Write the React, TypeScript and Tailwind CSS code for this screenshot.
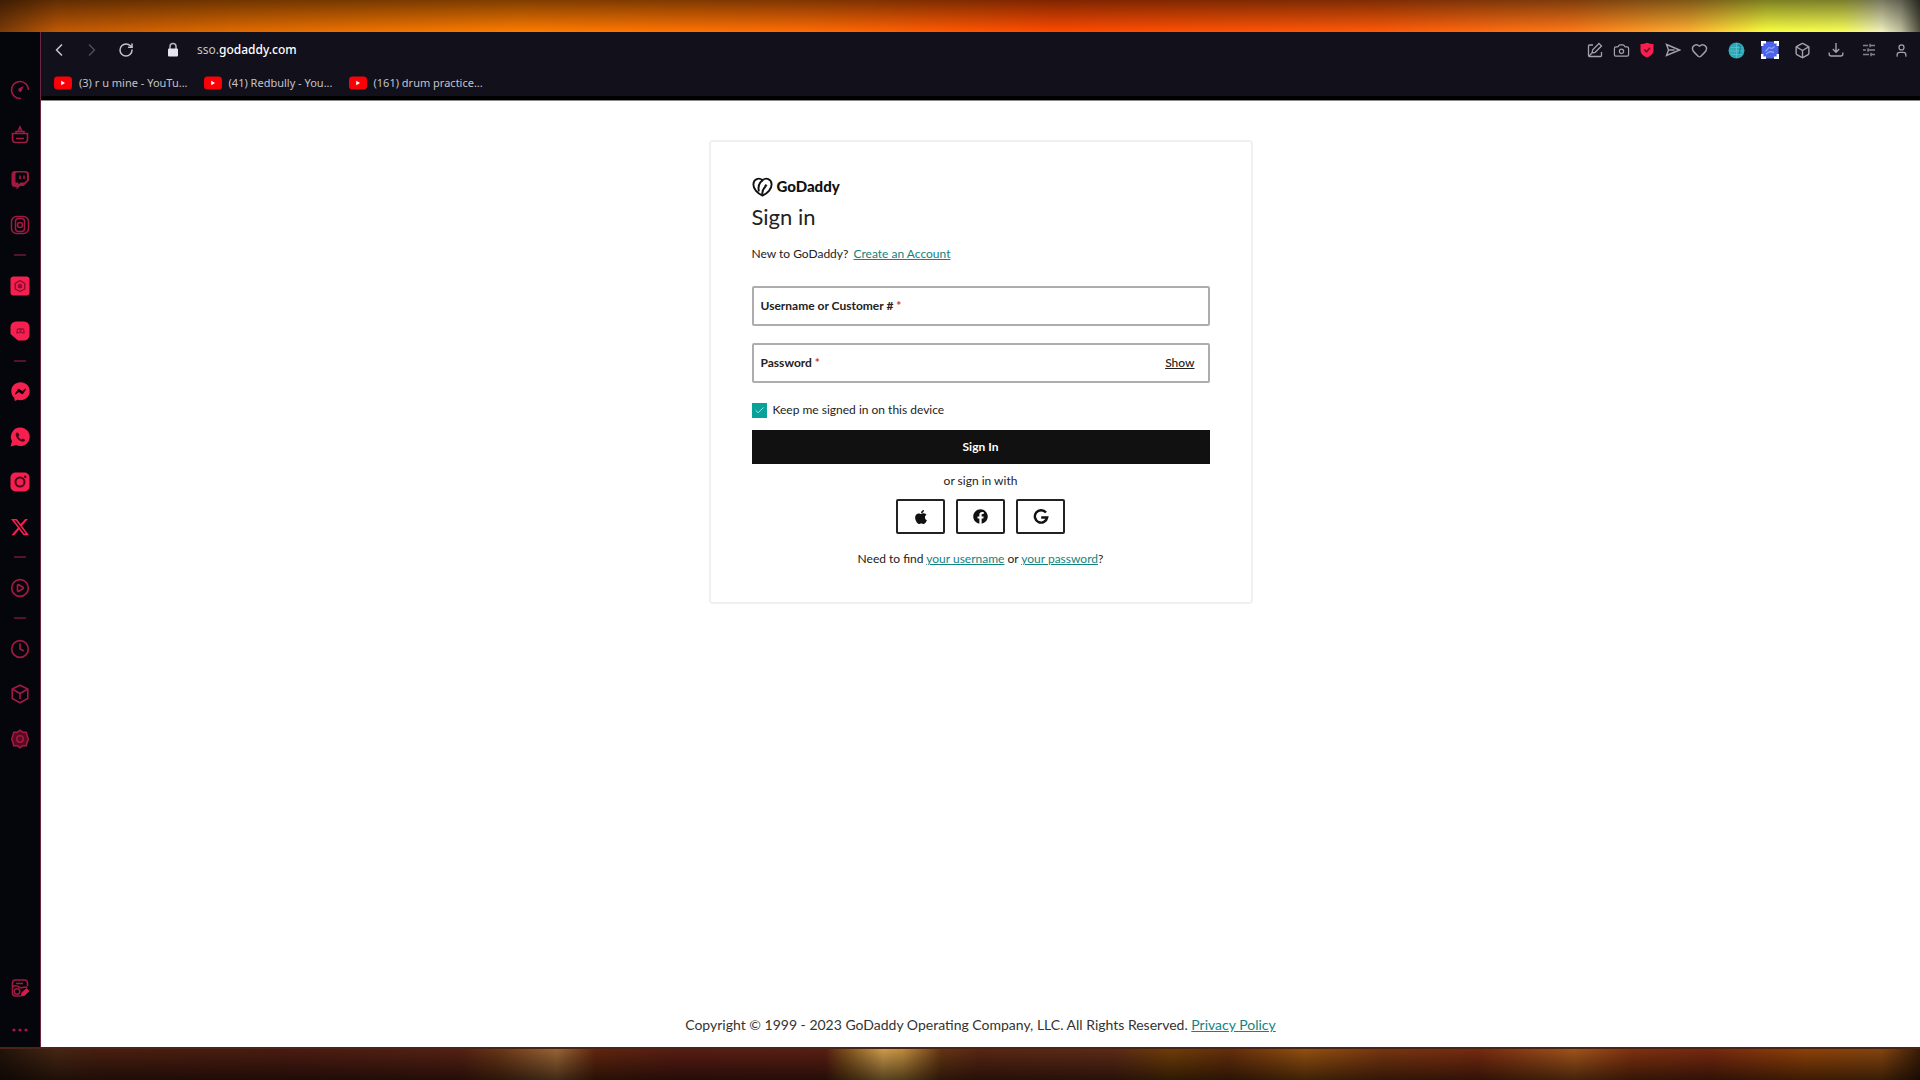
import { useState } from "react";
import type { ReactNode } from "react";
import { FaApple, FaFacebook, FaFacebookMessenger } from "react-icons/fa";
import { FaXTwitter } from "react-icons/fa6";
import {
	Box,
	Camera,
	Check,
	ChevronLeft,
	ChevronRight,
	CirclePlay,
	Clock4,
	Heart,
	RotateCw,
	User,
} from "lucide-react";

const GaugeIcon = () => (
	<svg width="20" height="20" viewBox="0 0 20 20" fill="none" stroke="currentColor" strokeWidth="1.6">
		<path d="M11 18.400A8.500 8.500 0 1 1 18.500 10" />
		<path d="M13.500 6 11.800 11a2 2 0 1 1-2.800-2.800z" fill="currentColor" stroke="none" />
	</svg>
);

const BagIcon = () => (
	<svg width="20" height="20" viewBox="0 0 20 20" fill="none" stroke="currentColor" strokeWidth="1.6">
		<path d="M2.500 8.500h15v6a3 3 0 0 1-3 3h-9a3 3 0 0 1-3-3z" />
		<path d="M6 8.500V6.500h8v2M8 6.500 10 2l2 4.500M6 13.500h8" />
	</svg>
);

const TwitchIcon = () => (
	<svg width="20" height="20" viewBox="0 0 20 20">
		<path
			fill="currentColor"
			fillRule="evenodd"
			d="M5 1h10.500a3.500 3.500 0 0 1 3.500 3.500v6L13.500 16H10l-3.500 3.500V17H5a3.500 3.500 0 0 1-3.500-3.500v-9A3.500 3.500 0 0 1 5 1zm2 1.600a1.500 1.500 0 0 0-1.500 1.500v8.400h3v2l2.200-2h3.600l2.700-2.500V4.600a2 2 0 0 0-2-2z"
		/>
		<path d="M10 5.500V9M14 5.500V9" stroke="currentColor" strokeWidth="1.600" />
	</svg>
);

const PlayerIcon = () => (
	<svg width="20" height="20" viewBox="0 0 20 20" fill="none" stroke="currentColor" strokeWidth="1.500">
		<rect x="1.500" y="1.500" width="17" height="17" rx="5" />
		<rect x="5.500" y="3.500" width="9" height="13" rx="3" />
		<circle cx="10" cy="10" r="2.500" />
	</svg>
);

const GptIcon = () => (
	<svg width="20" height="20" viewBox="0 0 20 20">
		<rect x="0.500" y="0.500" width="19" height="19" rx="3" fill="currentColor" />
		<g fill="none" stroke="#8c0c30" strokeWidth="1.400">
			<path d="m10 4.500 4.800 2.800v5.500L10 15.500l-4.800-2.700V7.300z" />
			<path d="M10 7.500v5M7.800 8.800l4.400 2.500M12.200 8.800l-4.400 2.500" />
		</g>
	</svg>
);

const ChatIcon = () => (
	<svg width="20" height="20" viewBox="0 0 20 20">
		<path fill="currentColor" d="M6 .5h8A5.500 5.500 0 0 1 19.500 6v8a5.500 5.500 0 0 1-5.500 5.500H8L.5 13V6A5.500 5.500 0 0 1 6 .5z" />
		<path d="M7 7.500c2-.8 5-.8 7 0l1 4.500-2 1-1-1H9l-1 1-2-1z" fill="#a50f38" />
		<path d="M8.700 9v2M12.300 9v2" stroke="#fa2456" strokeWidth="1.400" />
	</svg>
);

const WhatsIcon = () => (
	<svg width="20" height="20" viewBox="0 0 20 20">
		<path fill="currentColor" d="M10.500.5a9.300 9.300 0 1 1-4.300 17.600L.5 19.500l1.500-5.300A9.300 9.300 0 0 1 10.500.5z" />
		<path d="M6.700 5.500c-2 1.500-.5 5 1.600 7s5 3.300 6.700 1.200l-.2-1.300-2.200-1-1.200 1c-1.500-.5-2.600-1.700-3-3l1-1.100-1-2.300z" fill="#4a0619" />
	</svg>
);

const InstaIcon = () => (
	<svg width="20" height="20" viewBox="0 0 20 20">
		<rect x="0.500" y="0.500" width="19" height="19" rx="5" fill="currentColor" />
		<circle cx="10" cy="10" r="4.500" fill="none" stroke="#4a0619" strokeWidth="2" />
		<circle cx="15.300" cy="4.700" r="1.200" fill="#4a0619" />
	</svg>
);

const CubeIcon = () => (
	<svg width="20" height="20" viewBox="0 0 20 20" fill="none" stroke="currentColor" strokeWidth="1.600">
		<path d="M10 1.200 17.800 5v9.500L10 18.800l-7.800-4.300V5z" />
		<path d="M3 5.500 10 9.500l7-4M10 9.500V15" />
	</svg>
);

const GearIcon = () => (
	<svg width="20" height="20" viewBox="0 0 20 20" fill="#5c0a24" stroke="currentColor" strokeWidth="1.600">
		<path d="m10 1.200 2.600 2h3.600l.9 3.300L18.300 10l-1.200 3.500-.9 3.300h-3.600l-2.600 2-2.600-2H3.800l-.9-3.300L1.700 10l1.200-3.500.9-3.300h3.600z" />
		<circle cx="10" cy="10" r="3.200" />
	</svg>
);

const PictureIcon = () => (
	<svg width="20" height="20" viewBox="0 0 20 20" fill="none" stroke="currentColor" strokeWidth="1.600">
		<path d="M17.500 8V5A3 3 0 0 0 14.500 2h-9a3 3 0 0 0-3 3v10a3 3 0 0 0 3 3h5M6 5.500h7" />
		<path d="M2.500 9c3-2.500 5-1 7 .5s5-2 8 0" />
		<circle cx="7" cy="13.500" r="2.800" />
		<path d="m11 18 1-3.500 4.500-4 2.500 2.500-4.500 4.500z" fill="#d81c49" stroke="#d81c49" strokeWidth="0.800" />
	</svg>
);

const DotsIcon = () => (
	<svg width="18" height="6" viewBox="0 0 18 6" fill="currentColor">
		<circle cx="3" cy="3" r="1.600" />
		<circle cx="9" cy="3" r="1.600" />
		<circle cx="15" cy="3" r="1.600" />
	</svg>
);

const LockIcon = () => (
	<svg width="12" height="16" viewBox="0 0 12 16">
		<path d="M3 7V4.500a3 3 0 0 1 6 0V7" fill="none" stroke="#b9b8c0" strokeWidth="1.500" />
		<rect x="1" y="6.500" width="10" height="8" rx="1" fill="#e6e5ee" />
	</svg>
);

const EditIcon = () => (
	<svg width="16" height="16" viewBox="0 0 16 16" fill="none" stroke="currentColor" strokeWidth="1.300">
		<path d="M6 3H2.500A1 1 0 0 0 1.500 4v9.500a1 1 0 0 0 1 1h11a1 1 0 0 0 1-1V10" />
		<path d="m5 11 .7-3.200L12 1.500l2.500 2.500-6.300 6.300zM2 14l3-3" />
	</svg>
);

const ShieldIcon = () => (
	<svg width="14" height="16" viewBox="0 0 14 16">
		<path d="M7 .8c2 1 4 1.200 6.500 1.200v6c0 4-3 6-6.500 7.500C3.500 14 .5 12 .5 8V2C3 2 5 1.800 7 .8z" fill="#fa1e4e" />
		<path d="m4.300 7.500 2.200 2.300 3.500-4" fill="none" stroke="#6d0b26" strokeWidth="1.500" />
	</svg>
);

const SendIcon = () => (
	<svg width="16" height="16" viewBox="0 0 16 16" fill="none" stroke="currentColor" strokeWidth="1.400">
		<path d="M1.500 2.500 14.500 8l-13 5.500L3.500 8zM3.500 8h6" />
	</svg>
);

const GlobeIcon = () => (
	<svg width="17" height="17" viewBox="0 0 17 17">
		<circle cx="8.500" cy="8.500" r="8" fill="#2ea9b8" />
		<path d="M3 5.500h11M1.500 9h14M3 12.500h11M8.500 1v15" stroke="#5cc3cd" strokeWidth="0.800" />
		<path d="M10 3c3 1 3 3 2 4s1 3-1 5" stroke="#1d7f90" fill="none" strokeWidth="1.200" />
	</svg>
);

const CaptureIcon = () => (
	<svg width="18" height="18" viewBox="0 0 18 18">
		<rect x="0.500" y="0.500" width="17" height="17" rx="1" fill="#4a63e8" />
		<path d="M1.200 5V1.200H5M13 1.200h3.800V5M16.800 13v3.800H13M5 16.800H1.200V13" stroke="#fff" strokeWidth="2.400" fill="none" />
		<path d="M4.500 10.500 8 6.500l3 1 2.500-2M5 13l4-2.500 4 1" stroke="#8fa0f7" strokeWidth="1.300" fill="none" />
	</svg>
);

const DownloadIcon = () => (
	<svg width="16" height="16" viewBox="0 0 16 16" fill="none" stroke="currentColor" strokeWidth="1.400">
		<path d="M8 1v9M4.800 7 8 10.200 11.200 7M1.200 10.500v1.500a2 2 0 0 0 2 2h9.600a2 2 0 0 0 2-2v-1.500" />
	</svg>
);

const SlidersIcon = () => (
	<svg width="12" height="14" viewBox="0 0 12 14" fill="none" stroke="#85848d" strokeWidth="1.400">
		<path d="M0 2.500h5M7 2.500h5M0 7h3M5 7h7M0 11.500h6M8 11.500h4M7 .8v3.400M5 5.300v3.400M8 9.800v3.400" />
	</svg>
);

const YoutubeIcon = () => (
	<svg width="18" height="14" viewBox="0 0 18 14" className="shrink-0">
		<rect y="0.500" width="18" height="13" rx="3.500" fill="#fb0007" />
		<path d="M7.200 4.800 11 7 7.200 9.200z" fill="#fff" />
	</svg>
);

const HeartLogo = () => (
	<svg width="21" height="20" viewBox="0 0 21 20" fill="none" stroke="#111" strokeWidth="1.900">
		<path d="M10.500 18.500C5.500 16.500 1.200 12 1.400 7.200 1.600 1.800 7 .2 10.500 3.200c3.500-3 8.900-1.400 9.100 4 .2 4.800-4.100 9.300-9.100 11.300z" />
		<path d="M6.800 14.500C5.800 9.500 7.500 5.500 10.500 3.200" />
		<path d="M10.300 17.500c-.3-3 .8-5.800 3.200-8" />
		<circle cx="13.800" cy="8.600" r="0.900" fill="#111" strokeWidth="1" />
	</svg>
);

const GoogleIcon = () => (
	<svg width="16" height="16" viewBox="0 0 16 16">
		<path d="M13 3.600A6.200 6.200 0 1 0 14.200 8.500H8.200" fill="none" stroke="#111" strokeWidth="2.400" />
	</svg>
);

type SideItem = { name: string; icon?: ReactNode; bright?: boolean };

const sideItems: SideItem[] = [
	{ name: "Speed", icon: <GaugeIcon /> },
	{ name: "Mods", icon: <BagIcon /> },
	{ name: "Twitch", icon: <TwitchIcon /> },
	{ name: "Player", icon: <PlayerIcon /> },
	{ name: "divider" },
	{ name: "ChatGPT", icon: <GptIcon />, bright: true },
	{ name: "Discord", icon: <ChatIcon />, bright: true },
	{ name: "divider" },
	{ name: "Messenger", icon: <FaFacebookMessenger size={19} />, bright: true },
	{ name: "WhatsApp", icon: <WhatsIcon />, bright: true },
	{ name: "Instagram", icon: <InstaIcon />, bright: true },
	{ name: "X", icon: <FaXTwitter size={20} />, bright: true },
	{ name: "divider" },
	{ name: "Videos", icon: <CirclePlay size={20} /> },
	{ name: "divider" },
	{ name: "History", icon: <Clock4 size={20} /> },
	{ name: "Extensions", icon: <CubeIcon /> },
	{ name: "Settings", icon: <GearIcon /> },
];

const bookmarks = ["(3) r u mine - YouTu...", "(41) Redbully - You...", "(161) drum practice..."];

const pageTools = [
	{ name: "Edit", icon: <EditIcon /> },
	{ name: "Snapshot", icon: <Camera size={17} strokeWidth={1.75} /> },
	{ name: "Ad blocker", icon: <ShieldIcon /> },
	{ name: "Send", icon: <SendIcon /> },
	{ name: "Favourite", icon: <Heart size={17} /> },
];

const browserTools = [
	{ name: "Web", icon: <GlobeIcon /> },
	{ name: "Capture", icon: <CaptureIcon /> },
	{ name: "Extensions", icon: <Box size={17} /> },
	{ name: "Downloads", icon: <DownloadIcon /> },
	{ name: "Easy setup", icon: <SlidersIcon /> },
	{ name: "Profile", icon: <User size={15} /> },
];

const socials = [
	{ name: "Apple", icon: <FaApple size={16} /> },
	{ name: "Facebook", icon: <FaFacebook size={15} /> },
	{ name: "Google", icon: <GoogleIcon /> },
];

const Sidebar = () => {
	return (
		<nav className="flex w-[41px] shrink-0 flex-col border-r border-[#6b2741] bg-[#05060b] pt-[35px]">
			{sideItems.map((item, index) =>
				item.icon ? (
					<button
						key={index}
						aria-label={item.name}
						className={`flex h-[45px] items-center justify-center ${item.bright ? "text-[#f5204f]" : "text-[#a01a41]"}`}
					>
						{item.icon}
					</button>
				) : (
					<div key={index} className="flex h-4 items-center justify-center">
						<div className="h-0.5 w-3 bg-[#54142a]"></div>
					</div>
				)
			)}
			<button aria-label="Gallery" className="mt-auto flex h-[50px] items-center justify-center text-[#a01a41]">
				<PictureIcon />
			</button>
			<button aria-label="More" className="flex h-[34px] items-center justify-center text-[#a01a41]">
				<DotsIcon />
			</button>
		</nav>
	);
};

const BrowserBar = () => {
	return (
		<header className="border-b-4 border-black bg-[#12101a] font-['Noto_Sans',sans-serif] text-[#c4c3cb]">
			<div className="flex h-9 items-center pr-0.5 pl-0.5">
				<button aria-label="Back" className="flex w-8 justify-center">
					<ChevronLeft size={20} />
				</button>
				<button aria-label="Forward" className="flex w-[34px] justify-center text-[#4d4b56]">
					<ChevronRight size={20} />
				</button>
				<button aria-label="Reload" className="flex w-[34px] justify-center">
					<RotateCw size={16} strokeWidth={2.25} />
				</button>
				<div className="ml-6 flex items-center gap-[18px] text-xs">
					<LockIcon />
					<span>
						sso.<span className="font-medium text-white">godaddy.com</span>
					</span>
				</div>
				<div className="ml-auto flex items-center text-[#a3a2ab]">
					{pageTools.map((tool) => (
						<button key={tool.name} aria-label={tool.name} className="flex w-[26px] justify-center">
							{tool.icon}
						</button>
					))}
					<div className="w-2"></div>
					{browserTools.map((tool) => (
						<button key={tool.name} aria-label={tool.name} className="flex w-[33px] justify-center">
							{tool.icon}
						</button>
					))}
				</div>
			</div>
			<div className="flex h-7 items-center gap-4 pt-0.5 pl-[13px] text-[11px]">
				{bookmarks.map((title) => (
					<a key={title} href="#" className="flex items-center gap-[7px]">
						<YoutubeIcon />
						{title}
					</a>
				))}
			</div>
		</header>
	);
};

const SignIn = () => {
	const [showPassword, setShowPassword] = useState(false);
	const [keep, setKeep] = useState(true);

	return (
		<form
			onSubmit={(e) => e.preventDefault()}
			className="mt-[39px] w-full max-w-[544px] rounded border-2 border-[#eff1f1] px-[41px] pt-[35px] pb-[35px] text-xs text-[#222]"
		>
			<div className="flex h-5 items-center gap-1">
				<HeartLogo />
				<span className="text-[15px] font-black text-[#111]">GoDaddy</span>
			</div>
			<h1 className="mt-1.5 text-[22px] leading-7">Sign in</h1>
			<p className="mt-[15px] leading-4">
				New to GoDaddy?{" "}
				<a href="#" className="ml-0.5 text-[#128480] underline">
					Create an Account
				</a>
			</p>
			<div className="mt-6 flex h-10 items-center rounded-xs border-2 border-[#adadad] px-[7px]">
				<label htmlFor="username" className="shrink-0 font-bold">
					Username or Customer # <span className="text-[#d0313a]">*</span>
				</label>
				<input id="username" type="text" className="h-full min-w-0 flex-1 px-2 outline-0" />
			</div>
			<div className="mt-[17px] flex h-10 items-center rounded-xs border-2 border-[#adadad] pr-[13px] pl-[7px]">
				<label htmlFor="password" className="shrink-0 font-bold">
					Password <span className="text-[#d0313a]">*</span>
				</label>
				<input
					id="password"
					type={showPassword ? "text" : "password"}
					className="h-full min-w-0 flex-1 px-2 outline-0"
				/>
				<button type="button" className="font-medium underline" onClick={() => setShowPassword(!showPassword)}>
					Show
				</button>
			</div>
			<label className="mt-[19px] flex h-4 items-center gap-1.5">
				<span className="grid">
					<input
						type="checkbox"
						checked={keep}
						onChange={() => setKeep(!keep)}
						className="col-start-1 row-start-1 size-[15px] appearance-none bg-[#09a29b]"
					/>
					{keep && <Check size={11} className="pointer-events-none col-start-1 row-start-1 place-self-center text-[#a5f0e8]" />}
				</span>
				Keep me signed in on this device
			</label>
			<button type="submit" className="mt-3 h-[34px] w-full bg-[#111] font-bold text-white">
				Sign In
			</button>
			<p className="mt-[9px] text-center leading-4">or sign in with</p>
			<div className="mt-2.5 flex justify-center gap-[11px]">
				{socials.map((item) => (
					<button
						key={item.name}
						type="button"
						aria-label={item.name}
						className="flex h-[35px] w-[49px] items-center justify-center rounded-xs border-2 border-[#222] text-[#111]"
					>
						{item.icon}
					</button>
				))}
			</div>
			<p className="mt-[17px] text-center leading-4">
				Need to find{" "}
				<a href="#" className="text-[#128480] underline">
					your username
				</a>{" "}
				or{" "}
				<a href="#" className="text-[#128480] underline">
					your password
				</a>
				?
			</p>
		</form>
	);
};

const App = () => {
	return (
		<div className="flex min-h-screen flex-col bg-[#05060b]">
			{/* wallpaper showing above the browser window */}
			<div className="h-8 bg-[linear-gradient(to_bottom,rgba(0,0,0,0.5),rgba(0,0,0,0)),linear-gradient(to_right,#7a3a08_0%,#c25a04_3%,#e06a00_12%,#ff7c00_27%,#ff6c04_42%,#ff4a00_55%,#ff5a08_72%,#ff7a18_82%,#ffb030_88%,#fbff40_92%,#f8ff58_96%,#f2f2c0_98%,#c0c0a0_99%,#505040_100%)]"></div>
			<div className="flex flex-1">
				<Sidebar />
				<div className="flex min-w-0 flex-1 flex-col">
					<BrowserBar />
					<main className="flex flex-1 flex-col items-center border-t border-[#8a8a8a] bg-white font-['Lato',sans-serif]">
						<SignIn />
						<footer className="mt-auto pb-3 text-sm text-[#333]">
							Copyright © 1999 - 2023 GoDaddy Operating Company, LLC. All Rights Reserved.{" "}
							<a href="#" className="text-[#128480] underline">
								Privacy Policy
							</a>
						</footer>
					</main>
				</div>
			</div>
			{/* and below it */}
			<div className="h-[33px] border-t-2 border-[#4a2414] bg-[linear-gradient(to_bottom,rgba(0,0,0,0.05),rgba(0,0,0,0.6)),linear-gradient(to_right,#24140a_0%,#4a2814_3%,#4c2010_5%,#4e1c12_15%,#582214_24%,#6e3818_26%,#a06a38_29%,#64280e_31%,#5c1e14_35%,#5c2014_43%,#80501c_44%,#d8a450_46%,#c89440_47%,#6a3814_49%,#5c2814_51%,#602c18_58%,#744008_61%,#68300c_64%,#9a5410_68%,#7c3810_72%,#7a2c10_77%,#a8581c_82%,#843410_85%,#7a2a10_89%,#944408_94%,#8a4810_98%,#3c1e08_100%)]"></div>
		</div>
	);
};

export default App;
